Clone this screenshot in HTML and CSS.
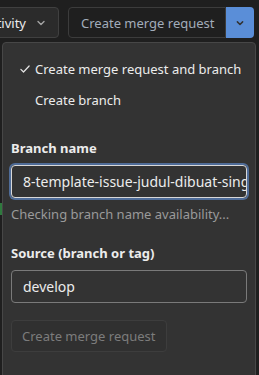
FILE: index.html
```html
<!DOCTYPE html>
<html>
<head>
<meta charset="utf-8">
<link rel="stylesheet" href="styles.css">
</head>
<body>
<div class="page">
  <div class="topbar">
    <button class="btn activity">Activity
      <svg class="chev" viewBox="0 0 16 16" width="12" height="12"><path d="M4 6l4 4 4-4" fill="none" stroke="#a5a5a5" stroke-width="1.8" stroke-linecap="round" stroke-linejoin="round"/></svg>
    </button>
    <div class="split">
      <button class="btn split-main">Create merge request</button>
      <button class="split-toggle"><svg viewBox="0 0 16 16" width="12" height="12"><path d="M4.5 6.5l3.5 3.5 3.5-3.5" fill="none" stroke="#333" stroke-width="2" stroke-linecap="round" stroke-linejoin="round"/></svg></button>
    </div>
  </div>
  <div class="side-strip"></div>
  <div class="dropdown">
    <ul class="menu">
      <li class="item"><svg class="check" viewBox="0 0 16 16" width="12" height="12"><path d="M2.5 8.5l3.5 3.5 7.5-8" fill="none" stroke="#e5e5e5" stroke-width="1.6" stroke-linecap="round" stroke-linejoin="round"/></svg><span>Create merge request and branch</span></li>
      <li class="item"><span class="nocheck"></span><span>Create branch</span></li>
    </ul>
    <form class="form">
      <label class="label">Branch name</label>
      <div class="input focused"><span>8-template-issue-judul-dibuat-singkat</span></div>
      <p class="help">Checking branch name availability...</p>
      <label class="label">Source (branch or tag)</label>
      <div class="input"><span>develop</span></div>
      <button type="button" class="btn disabled">Create merge request</button>
    </form>
  </div>
</div>
</body>
</html>
```
FILE: styles.css
```css
* { box-sizing: border-box; }
html, body { margin: 0; padding: 0; }
body {
  background: #1f1f1f;
  font-family: "Noto Sans", "Open Sans", sans-serif;
  font-size: 13px;
  color: #ececec;
  width: 259px;
  height: 375px;
  overflow: hidden;
}
.page { position: relative; width: 259px; height: 375px; overflow: hidden; }
.topbar {
  display: flex;
  justify-content: flex-end;
  gap: 9px;
  padding: 7px 5px 0 0;
  height: 38px;
}
.btn {
  font-family: inherit;
  font-size: 13px;
  border-radius: 4px;
  border: 1px solid #404040;
  background: #2b2b2b;
  color: #ececec;
  height: 31px;
  padding: 0 12px;
  display: flex;
  align-items: center;
  white-space: nowrap;
  flex-shrink: 0;
}
.activity { gap: 9px; padding-right: 11px; }
.split { display: flex; flex-shrink: 0; }
.split-main {
  background: #1f1f1f;
  color: #a2acba;
  border-color: #3c3c3c;
  border-radius: 4px 0 0 4px;
  width: 158px;
}
.split-toggle {
  width: 28px;
  height: 31px;
  border: none;
  background: #5a8ed8;
  border-radius: 0 4px 4px 0;
  display: flex;
  align-items: center;
  justify-content: center;
  padding: 0;
}
.side-strip {
  position: absolute;
  left: 0; top: 203px;
  width: 2px; height: 12px;
  background: #2f7a3e;
}
.dropdown {
  position: absolute;
  left: 2px; top: 42px;
  width: 254px;
  height: 345px;
  background: #333333;
  border: 1px solid #474747;
  border-radius: 4px;
}
.menu { list-style: none; margin: 0; padding: 10px 0 5px; }
.item {
  display: flex;
  align-items: center;
  height: 31px;
  padding-left: 16px;
  gap: 4px;
  white-space: nowrap;
}
.check, .nocheck { width: 12px; height: 12px; flex-shrink: 0; }
.form {
  padding: 18px 8px 0 8px;
  display: flex;
  flex-direction: column;
  align-items: flex-start;
}
.label { font-weight: 700; line-height: 20px; margin-bottom: 7px; }
.input {
  width: 236px;
  height: 33px;
  border: 1px solid #7a7a7a;
  border-radius: 4px;
  padding: 0 11px;
  display: flex;
  align-items: center;
  overflow: hidden;
  white-space: nowrap;
  font-size: 14px;
}
.input.focused {
  border-color: #d8d8d8;
  box-shadow: 0 0 0 2px #4f6c98;
}
.help { margin: 6px 0 19px; color: #9a9a9a; line-height: 20px; }
.disabled {
  margin-top: 17px;
  background: #303030;
  border-color: #3d3d3d;
  color: #7c7c7c;
  height: 32px;
  padding: 0 10px;
}
```
